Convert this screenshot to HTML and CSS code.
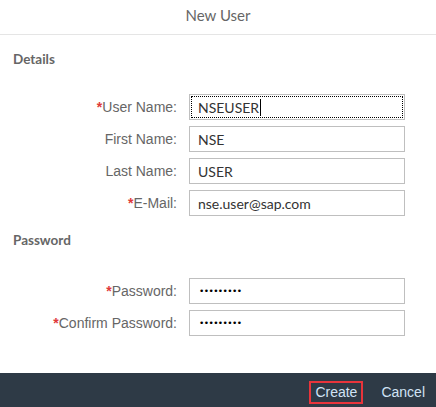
FILE: index.html
```html
<!DOCTYPE html>
<html>
<head>
<meta charset="utf-8">
<link rel="stylesheet" href="styles.css">
</head>
<body>
<div class="dialog">
  <header class="dialog-header">New User</header>
  <main class="dialog-content">
    <h2 class="section-title details-title">Details</h2>
    <div class="form-grid">
      <label class="field-label"><span class="req">*</span>User Name:</label>
      <div class="input focused"><span class="value">NSEUSER</span><span class="caret"></span></div>
      <label class="field-label">First Name:</label>
      <div class="input"><span class="value">NSE</span></div>
      <label class="field-label">Last Name:</label>
      <div class="input"><span class="value">USER</span></div>
      <label class="field-label"><span class="req">*</span>E-Mail:</label>
      <div class="input"><span class="value">nse.user@sap.com</span></div>
    </div>
    <h2 class="section-title password-title">Password</h2>
    <div class="form-grid">
      <label class="field-label"><span class="req">*</span>Password:</label>
      <div class="input"><span class="dots">•••••••••</span></div>
      <label class="field-label"><span class="req">*</span>Confirm Password:</label>
      <div class="input"><span class="dots">•••••••••</span></div>
    </div>
  </main>
  <footer class="dialog-footer">
    <button class="footer-btn highlighted">Create</button>
    <button class="footer-btn">Cancel</button>
  </footer>
</div>
</body>
</html>
```
FILE: styles.css
```css
* { box-sizing: border-box; }
html, body { margin: 0; padding: 0; background: #fff; }
body { width: 436px; height: 407px; overflow: hidden; }

.dialog {
  width: 436px;
  height: 407px;
  display: flex;
  flex-direction: column;
  background: #fff;
}

.dialog-header {
  height: 35px;
  border-bottom: 1px solid #e5e5e5;
  display: flex;
  align-items: center;
  justify-content: center;
  font-family: Lato, "Open Sans", sans-serif;
  font-size: 15px;
  color: #666;
  padding-bottom: 5px;
}

.dialog-content {
  flex: 1;
  padding: 0 0 0 13px;
}

.section-title {
  margin: 0;
  font-family: Lato, "Open Sans", sans-serif;
  font-weight: 700;
  font-size: 13.5px;
  line-height: 16px;
  color: #666;
}
.details-title { margin-top: 16px; margin-bottom: 27px; }
.password-title { margin-top: 16px; margin-bottom: 30px; }

.form-grid {
  display: grid;
  grid-template-columns: 164px 216px;
  column-gap: 12px;
  row-gap: 6px;
}

.field-label {
  font-family: "Liberation Sans", Arial, sans-serif;
  font-size: 14px;
  color: #666;
  text-align: right;
  align-self: center;
  white-space: nowrap;
}
.req { color: #e03a3a; font-weight: 700; font-size: 14px; }

.input {
  height: 26px;
  border: 1px solid #bfbfbf;
  display: flex;
  align-items: center;
  padding-left: 8px;
  font-family: Lato, "Open Sans", sans-serif;
  font-size: 14px;
  color: #333;
  position: relative;
}
.input.focused { outline: 1px dotted #000; outline-offset: -3px; }
.caret {
  display: inline-block;
  width: 1px;
  height: 17px;
  background: #000;
  margin-left: 1px;
}
.dots {
  font-family: "DejaVu Sans", sans-serif;
  font-size: 9px;
  letter-spacing: -0.6px;
  color: #000;
  padding-left: 1px;
}

.dialog-footer {
  height: 34px;
  background: #2e3a46;
  display: flex;
  justify-content: flex-end;
  align-items: center;
  padding-right: 5px;
  gap: 12px;
}
.footer-btn {
  background: transparent;
  border: 2px solid transparent;
  color: #d1e3f5;
  font-family: "Liberation Sans", Arial, sans-serif;
  font-size: 14px;
  height: 23px;
  padding: 0 4px;
  margin-top: 4px;
  cursor: pointer;
}
.footer-btn.highlighted { border-color: #e8343b; }
```
